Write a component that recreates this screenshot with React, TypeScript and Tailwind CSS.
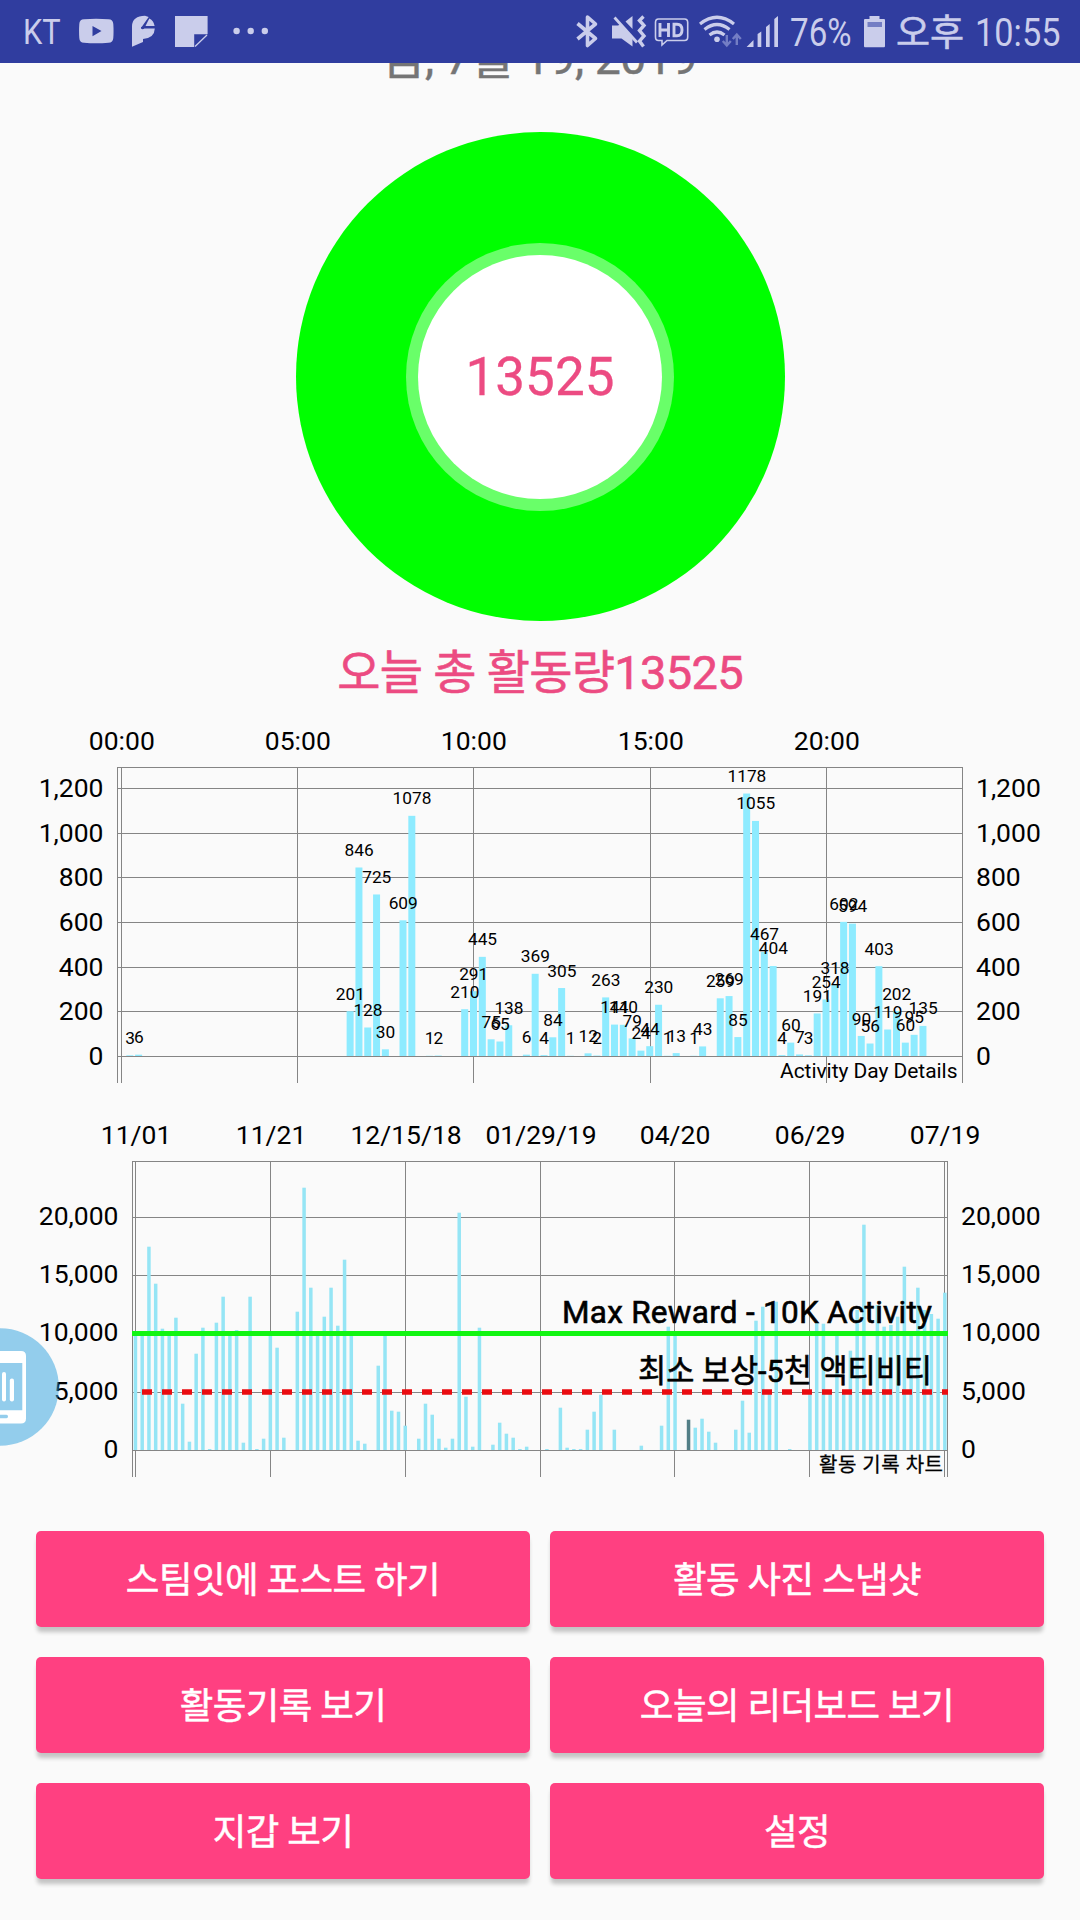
const dayBars: [number, number][] = [
  [1, 3], [2, 6], [26, 201], [27, 846], [28, 128], [29, 725], [30, 30], [32, 609], [33, 1078],
  [35, 1], [36, 2], [39, 210], [40, 291], [41, 445], [42, 75], [43, 65], [44, 138], [46, 6],
  [47, 369], [48, 4], [49, 84], [50, 305], [51, 1], [53, 12], [54, 2], [55, 263], [56, 141],
  [57, 140], [58, 79], [59, 24], [60, 44], [61, 230], [62, 1], [63, 13], [65, 1], [66, 43],
  [68, 259], [69, 269], [70, 85], [71, 1178], [72, 1055], [73, 467], [74, 404], [75, 4],
  [76, 60], [77, 7], [78, 3], [79, 191], [80, 254], [81, 318], [82, 602], [83, 594], [84, 90],
  [85, 56], [86, 403], [87, 119], [88, 202], [89, 60], [90, 95], [91, 135],
];

const dayHours = [
  { x: 121.5, label: "00:00" },
  { x: 297.5, label: "05:00" },
  { x: 473.5, label: "10:00" },
  { x: 650.5, label: "15:00" },
  { x: 826.5, label: "20:00" },
];

const dayLevels = [
  { y: 788.5, label: "1,200" },
  { y: 833.5, label: "1,000" },
  { y: 877.5, label: "800" },
  { y: 922.5, label: "600" },
  { y: 967.5, label: "400" },
  { y: 1011.5, label: "200" },
  { y: 1056.5, label: "0" },
];

// bar height in px for every recorded day, 0 where nothing was recorded
const historyBars = [
  115, 115, 203.3, 166.3, 121.3, 115, 132.3, 46.3, 8.3, 96.3, 122.3, 1, 127.3, 153.3, 115, 120,
  7.3, 153.3, 1, 11.3, 118, 102.3, 12.3, 0, 138.3, 262.3, 162.3, 115, 133.3, 162.3, 124.3, 190.3,
  115, 9.3, 6.3, 0, 84.3, 117, 39.3, 38.3, 24.3, 0, 11.3, 46.3, 35.3, 11.3, 2.3, 11.3, 237.3,
  53.3, 3.3, 122.3, 0, 5.3, 27.3, 16.3, 12.3, 1, 3.3, 0, 0, 1, 0, 42.3, 2.3, 1, 1, 20.3, 38.3,
  55.3, 0, 20.3, 0, 0, 0, 4.3, 0, 0, 24.3, 123.3, 115, 0, 30.3, 22.3, 31.3, 18.3, 7.3, 0, 0,
  20.3, 49.3, 17.3, 129.3, 143.3, 56, 148.3, 0, 1, 0, 0, 57, 127, 126.3, 57, 115, 57, 99.3,
  140, 225.3, 57, 145, 123.3, 125, 133.3, 183.3, 119, 162.3, 140, 136, 131.3, 157.3,
];

const historyDates = [
  { x: 135.5, label: "11/01" },
  { x: 270.5, label: "11/21" },
  { x: 405.5, label: "12/15/18" },
  { x: 540.5, label: "01/29/19" },
  { x: 674.5, label: "04/20" },
  { x: 809.5, label: "06/29" },
  { x: 944.5, label: "07/19" },
];

const historyLevels = [
  { y: 1217.5, label: "20,000" },
  { y: 1275.5, label: "15,000" },
  { y: 1333.5, label: "10,000" },
  { y: 1392.5, label: "5,000" },
  { y: 1450.5, label: "0" },
];

const buttons = ["스팀잇에 포스트 하기", "활동 사진 스냅샷", "활동기록 보기", "오늘의 리더보드 보기", "지갑 보기", "설정"];

function StatusBar() {
  return (
    <header className="relative z-10 flex h-[63px] shrink-0 items-center bg-[#303d9f] text-[#cacdeb]">
      <span className="ml-[23px] w-[56px] shrink-0 pt-px text-[35px] leading-none">
        <span className="inline-block origin-left scale-x-[0.88]">KT</span>
      </span>
      <svg className="shrink-0" width="35" height="63" viewBox="79 0 35 63" fill="currentColor">
        <path fillRule="evenodd" d="M84 19.3Q96 18 108.500 19.300Q113 19.500 113.300 24Q113.800 31 113.300 38Q113 42.500 108.500 42.800Q96 43.800 84 42.800Q79.500 42.500 79.300 38Q78.800 31 79.300 24Q79.500 19.500 84 19.300ZM92.500 26V36.300L101.500 31.100Z" />
      </svg>
      <svg className="ml-[18px] shrink-0" width="24" height="63" viewBox="132 0 24 63" fill="currentColor">
        <path d="M132 46.800V26Q132.500 16 145 15.800L148.700 17L142 26.500Q140.500 27 141 28.500Q142.500 29.800 144.500 28.500H154.800Q154.500 38 143 39V42Z" />
        <path d="M149.300 18.500Q153.800 20.500 154.600 26H145.500Z" />
      </svg>
      <svg className="ml-[19px] shrink-0" width="33" height="63" viewBox="175 0 33 63" fill="currentColor">
        <path d="M175 16H207.600V34.300H194.200V47H175Z" />
        <path d="M207 35L195 46.500" stroke="currentColor" strokeWidth="1.300" />
      </svg>
      <svg className="ml-[24px] shrink-0" width="38" height="63" viewBox="232 0 38 63" fill="currentColor">
        <circle cx="236.600" cy="31" r="3.200" />
        <circle cx="250.700" cy="31" r="3.200" />
        <circle cx="264.800" cy="31" r="3.200" />
      </svg>
      <svg className="ml-auto shrink-0" width="26" height="63" viewBox="574 0 26 63" fill="none" stroke="currentColor" strokeWidth="3.600">
        <path d="M577.500 23.500L595.500 38.500L587.500 45.500V17L595.500 24L577.500 39" strokeLinejoin="round" />
      </svg>
      <svg className="ml-[11px] shrink-0" width="36" height="63" viewBox="611 0 36 63" fill="currentColor">
        <path d="M612 25.500H618L621 24L632.500 37V46.500L621.500 38.500H612ZM625.500 21.500L632.500 16V29Z" />
        <path d="M614.500 17.500L637 42.500" stroke="currentColor" strokeWidth="2.800" />
        <path d="M643.500 16.500L639.500 20.500L644 25.500L639.500 30.500L644 36L639.500 41L643.500 46.500" fill="none" stroke="currentColor" strokeWidth="3.400" />
      </svg>
      <svg className="ml-[7px] shrink-0" width="36" height="63" viewBox="654 0 36 63" fill="none" stroke="currentColor" strokeWidth="1.600">
        <path d="M658.500 19H684.500Q687.700 19 687.700 22.500V37Q687.700 40.500 684.500 40.500H667L662 45V40.500H658.500Q655.500 40.500 655.500 37V22.500Q655.500 19 658.500 19Z" />
        <path d="M660 23V37M668.500 23V37M660 30H668.500M674 24.300V35.700H677Q682 35.700 682 30T677 24.300Z" strokeWidth="2.900" />
      </svg>
      <svg className="ml-[8px] shrink-0" width="45" height="63" viewBox="698 0 45 63" fill="none" stroke="currentColor" strokeWidth="3.200">
        <path d="M700 24Q717 10.500 734 24M704.500 29.500Q717 19.500 729.500 29.500M709.500 35Q717 29 724.500 35" />
        <circle cx="717" cy="39.200" r="2.800" fill="currentColor" stroke="none" />
        <path d="M726.800 35V44.500M722.800 41L726.800 45.500L730.800 41M736.800 45V35.500M732.800 39L736.800 34.500L740.800 39" stroke="#747ec4" strokeWidth="2.400" />
      </svg>
      <svg className="ml-[3px] shrink-0" width="34" height="63" viewBox="746 0 34 63" fill="currentColor">
        <path d="M746.600 47L753.500 40V47ZM757.600 34L761.300 31.500V47H757.600ZM766 27L769.700 24V47H766ZM774.300 19L778 16V47H774.300Z" />
      </svg>
      <span className="ml-[10px] w-[73px] shrink-0 pt-[3px] text-[39px] leading-none">
        <span className="inline-block origin-left scale-x-[0.85]">76%</span>
      </span>
      <svg className="shrink-0" width="24" height="63" viewBox="863 0 24 63" fill="currentColor">
        <path d="M869.500 16H879.500V19H884Q885 19 885 20V46Q885 47.300 884 47.300H865Q864 47.300 864 46V20Q864 19 865 19H869.500Z" />
        <path d="M867.500 22H882V27H867.500Z" fill="#747ec4" />
      </svg>
      <span className="ml-[9px] w-[79px] shrink-0 pt-[3px] text-[37px] leading-none [-webkit-text-stroke:0.6px]">오후</span>
      <span className="w-[105px] shrink-0 pt-[3px] text-[39px] leading-none">
        <span className="inline-block origin-left scale-x-[0.88]">10:55</span>
      </span>
    </header>
  );
}

function DayChart() {
  return (
    <svg className="block shrink-0" width="1080" height="410" viewBox="0 700 1080 410">
      <g stroke="#858585" strokeWidth="1">
        <path d="M117 767.500H963M117.500 767V1083M962.500 767V1083" />
        {dayHours.map((h) => (
          <line key={h.label} x1={h.x} x2={h.x} y1="767" y2="1083" />
        ))}
        {dayLevels.map((l) => (
          <line key={l.label} x1="117" x2="963" y1={l.y} y2={l.y} />
        ))}
      </g>
      <g fill="#8eebff">
        {dayBars.map(([slot, value]) => (
          <rect key={slot} x={117.5 + slot * 8.8125} y={1056 - value * 0.2228} width="7" height={value * 0.2228} />
        ))}
      </g>
      <g fill="#000" fontSize="17.300" textAnchor="middle">
        {dayBars.map(([slot, value]) => (
          <text key={slot} x={121.2 + slot * 8.8125} y={1044.6 - value * 0.2231}>{value}</text>
        ))}
      </g>
      <g fill="#000" fontSize="26.500">
        {dayHours.map((h) => (
          <text key={h.label} x={h.x + 0.3} y="750" textAnchor="middle">{h.label}</text>
        ))}
        {dayLevels.map((l) => (
          <text key={l.label} x="103.500" y={l.y + 8} textAnchor="end">{l.label}</text>
        ))}
        {dayLevels.map((l) => (
          <text key={l.label} x="976" y={l.y + 8}>{l.label}</text>
        ))}
      </g>
      <text x="780" y="1078" fontSize="21" textLength="177.500">Activity Day Details</text>
    </svg>
  );
}

function HistoryChart() {
  return (
    <svg className="block shrink-0" width="1080" height="390" viewBox="0 1110 1080 390">
      <g stroke="#858585" strokeWidth="1">
        <path d="M132 1161.500H948M132.500 1161V1477M947.500 1161V1477" />
        {historyDates.map((d) => (
          <line key={d.label} x1={d.x} x2={d.x} y1="1161" y2="1477" />
        ))}
        {historyLevels.map((l) => (
          <line key={l.label} x1="132" x2="948" y1={l.y} y2={l.y} />
        ))}
      </g>
      {historyBars.map((height, i) => (
        <rect key={i} x={133.7 + i * 6.745} y={1450 - height} width="3.500" height={height} fill={i === 82 ? "#537f87" : "#95e5f5"} />
      ))}
      <path d="M132 1333.500H948" stroke="#12f512" strokeWidth="5" />
      <path d="M142 1392H948" stroke="#ea0c10" strokeWidth="5.500" strokeDasharray="10 10" />
      <g fill="#000" fontSize="31.500" stroke="#000" strokeWidth="0.600">
        <text x="562" y="1323" textLength="370">Max Reward - 10K Activity</text>
        <text x="638" y="1382" textLength="294" lengthAdjust="spacingAndGlyphs">최소 보상-5천 액티비티</text>
      </g>
      <g fill="#000" fontSize="26.500">
        {historyDates.map((d) => (
          <text key={d.label} x={d.x + 0.6} y="1144" textAnchor="middle">{d.label}</text>
        ))}
        {historyLevels.map((l) => (
          <text key={l.label} x="118.500" y={l.y + 7.7} textAnchor="end">{l.label}</text>
        ))}
        {historyLevels.map((l) => (
          <text key={l.label} x="961" y={l.y + 7.7}>{l.label}</text>
        ))}
      </g>
      <text x="819" y="1472" fontSize="20" textLength="124" stroke="#000" strokeWidth="0.300">활동 기록 차트</text>
    </svg>
  );
}

function FloatingWidget() {
  return (
    <svg className="absolute left-0 top-[1327px]" width="60" height="120" viewBox="0 1327 60 120">
      <circle cx="0" cy="1387" r="58.800" fill="#2ca0de" fillOpacity="0.500" />
      <path fillRule="evenodd" fill="#fff" d="M0 1351H21Q26 1351 26 1356V1418.500Q26 1423.500 21 1423.500H0ZM0 1363V1410.300H22.300V1363ZM0 1414.800V1418.200H6.500Q8 1418 8 1416.500T6.500 1414.800Z" />
      <rect x="2" y="1372" width="4" height="29.500" rx="2" fill="#fff" />
      <rect x="9.800" y="1378.500" width="4.200" height="23" rx="2" fill="#fff" />
    </svg>
  );
}

export default function App() {
  return (
    <div className="relative flex h-[1920px] w-[1080px] flex-col overflow-hidden bg-[#fafafa] font-[Roboto,'Noto_Sans_CJK_KR',sans-serif]">
      <StatusBar />
      <div className="h-[69px] shrink-0 overflow-hidden text-center text-[#757575]">
        <p className="-mt-[35px] text-[46.500px] leading-[60px] tracking-[-0.500px] [-webkit-text-stroke:0.4px]">금, 7월 19, 2019</p>
      </div>
      <div className="mx-auto flex h-[489px] w-[489px] shrink-0 items-center justify-center rounded-full bg-[#00ff00]">
        <div className="flex h-[268px] w-[268px] items-center justify-center rounded-full bg-[#69ff69]">
          <div className="flex h-[244px] w-[244px] items-center justify-center rounded-full bg-white pt-[3px] text-[53px] text-[#ec4b82] [-webkit-text-stroke:0.3px]">
            13525
          </div>
        </div>
      </div>
      <p className="h-[79px] shrink-0 pt-[22px] text-center text-[47px] leading-[60px] tracking-[-0.700px] text-[#ec4b82] [-webkit-text-stroke:0.6px]">오늘 총 활동량13525</p>
      <DayChart />
      <HistoryChart />
      <div className="grid grid-cols-2 gap-x-5 gap-y-[30px] px-9 pt-[31px]">
        {buttons.map((label) => (
          <button
            key={label}
            className="h-24 rounded-[5px] bg-[#ff4081] pt-[5px] text-[36.500px] tracking-[-0.550px] text-white shadow-[0_6px_4px_-1px_rgba(0,0,0,0.22)] [-webkit-text-stroke:0.5px]"
          >
            {label}
          </button>
        ))}
      </div>
      <FloatingWidget />
    </div>
  );
}
